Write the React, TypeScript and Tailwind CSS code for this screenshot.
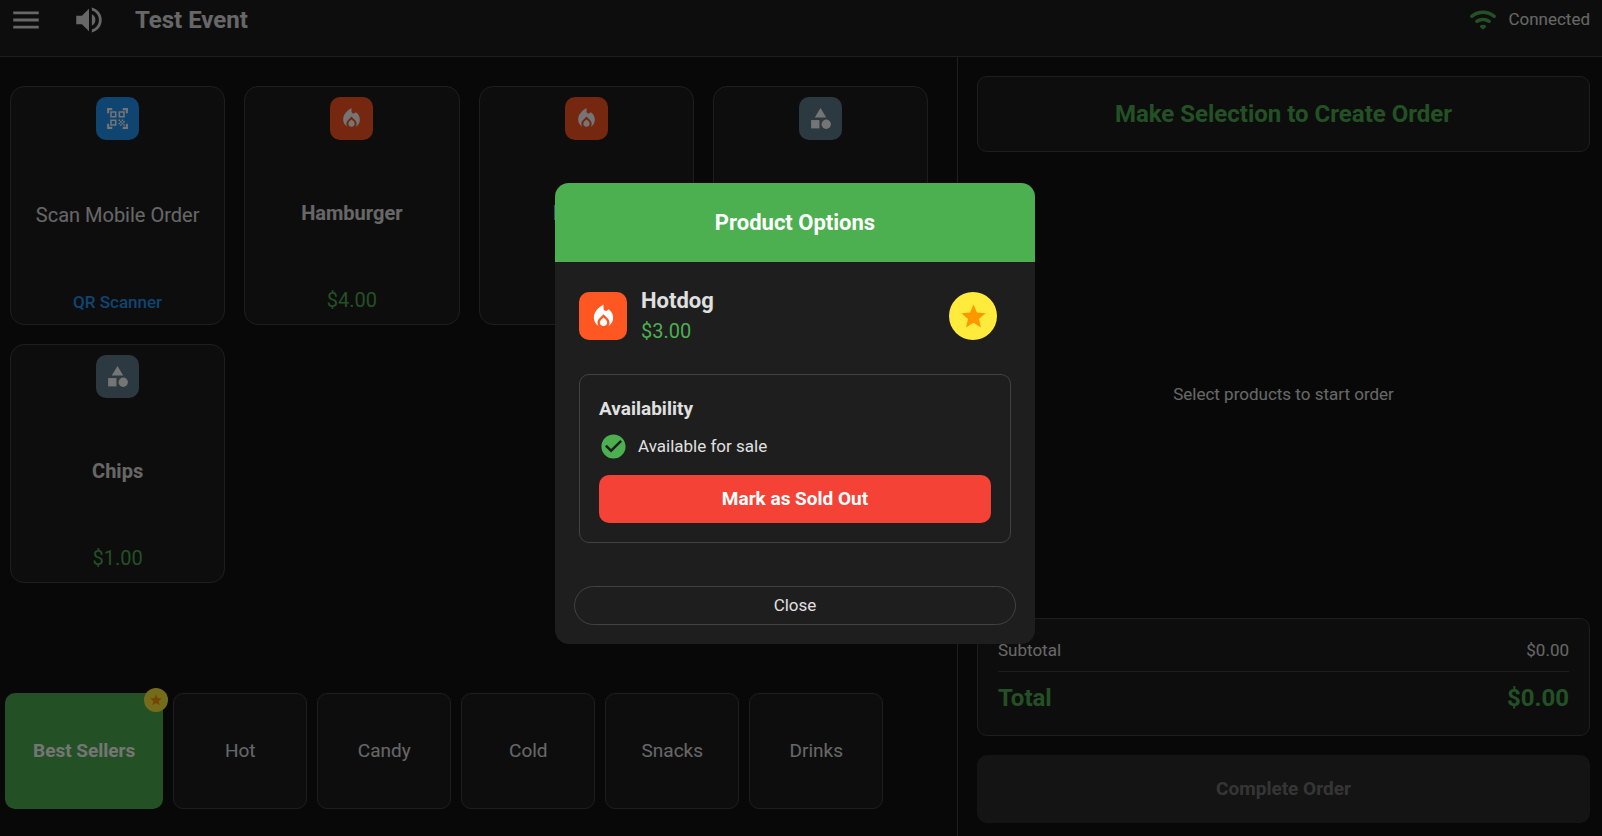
import React from 'react';
import type { IconType } from 'react-icons';
import {
  MdCategory,
  MdCheckCircle,
  MdLocalFireDepartment,
  MdMenu,
  MdQrCodeScanner,
  MdStar,
  MdVolumeUp
} from 'react-icons/md';

interface Product {
  name: string;
  price: string;
  icon: IconType;
  iconBg: string;
}

const products: Product[] = [
  { name: 'Hamburger', price: '$4.00', icon: MdLocalFireDepartment, iconBg: 'bg-[#ff5722]' },
  { name: 'Hotdog', price: '$3.00', icon: MdLocalFireDepartment, iconBg: 'bg-[#ff5722]' },
  { name: 'Candy', price: '$2.00', icon: MdCategory, iconBg: 'bg-[#607d8b]' },
  { name: 'Chips', price: '$1.00', icon: MdCategory, iconBg: 'bg-[#607d8b]' }
];

const categories = ['Hot', 'Candy', 'Cold', 'Snacks', 'Drinks'];

const cardClass =
  'aspect-[9/10] flex flex-col items-center justify-between rounded-[14px] border border-[#424242] bg-[#1e1e1e] px-2 py-[10px] cursor-pointer';

const WifiIcon: React.FC = () => (
  <svg className="size-[30px] text-[#4caf50]" viewBox="0 0 24 24" fill="currentColor">
    <path d="M2.06 10.06c.51.51 1.32.56 1.87.1 4.67-3.84 11.45-3.84 16.13-.01.56.46 1.38.42 1.89-.09.59-.59.55-1.57-.1-2.1-5.71-4.67-13.97-4.67-19.69 0-.65.52-.7 1.5-.1 2.1z" />
    <path d="M9.82 17.82l1.47 1.47c.39.39 1.02.39 1.41 0l1.47-1.47c.47-.47.37-1.28-.23-1.59-1.22-.63-2.68-.63-3.91 0-.57.31-.68 1.12-.21 1.59z" />
    <path d="M6.09 14.09c.49.49 1.26.54 1.83.13 2.44-1.73 5.72-1.73 8.16 0 .57.4 1.34.36 1.83-.13l.01-.01c.6-.6.56-1.62-.13-2.11-3.44-2.49-8.13-2.49-11.58 0-.69.5-.73 1.51-.12 2.12z" />
  </svg>
);

const Header: React.FC = () => (
  <header className="flex items-start justify-between border-b border-[#424242] bg-[#1e1e1e] pr-3 pb-4 pl-[9px]">
    <div className="flex h-10 items-center">
      <button aria-label="Menu" className="cursor-pointer">
        <MdMenu size={34} />
      </button>
      <button aria-label="Sound" className="ml-[29px] cursor-pointer">
        <MdVolumeUp size={34} />
      </button>
      <h1 className="ml-[29px] text-2xl font-bold">Test Event</h1>
    </div>
    <div className="flex h-10 items-center gap-[10px]">
      <WifiIcon />
      <span className="text-[17px]">Connected</span>
    </div>
  </header>
);

const ProductCard: React.FC<{ product: Product }> = ({ product }) => {
  const Icon = product.icon;

  return (
    <button className={cardClass}>
      <span className={`flex size-[43px] items-center justify-center rounded-[10px] text-white ${product.iconBg}`}>
        <Icon size={25} />
      </span>
      <span className="pb-[2px] text-xl leading-6 font-bold">{product.name}</span>
      <span className="pb-[2px] text-xl leading-6 text-[#4caf50]">{product.price}</span>
    </button>
  );
};

const CategoryBar: React.FC = () => (
  <nav className="flex gap-[10px] pb-[27px] pl-[5px]">
    <button className="relative h-[116px] cursor-pointer rounded-[10px] bg-[#4caf50] px-7 text-[19px] font-bold text-white">
      Best Sellers
      {/* Star badge */}
      <span className="absolute -top-[5px] -right-[5px] flex size-6 items-center justify-center rounded-full bg-[#ffeb3b] text-[#ff9800]">
        <MdStar size={14} />
      </span>
    </button>
    {categories.map((category) => (
      <button
        key={category}
        className="h-[116px] min-w-[134px] cursor-pointer rounded-[10px] border border-[#424242] bg-[#1e1e1e] text-[19px]"
      >
        {category}
      </button>
    ))}
  </nav>
);

const OrderPanel: React.FC = () => (
  <aside className="flex flex-col border-l border-[#424242] pt-[19px] pr-3 pb-[13px] pl-[19px]">
    <div className="mb-[19px] flex h-[76px] items-center justify-center rounded-[10px] border border-[#424242] bg-[#1e1e1e]">
      <h2 className="text-2xl font-bold text-[#4caf50]">Make Selection to Create Order</h2>
    </div>

    <div className="flex flex-1 items-center justify-center">
      <p className="text-[17px]">Select products to start order</p>
    </div>

    {/* Totals */}
    <div className="mb-[19px] rounded-[10px] border border-[#424242] bg-[#1e1e1e] px-5 pt-[19px] pb-[21px]">
      <div className="flex justify-between border-b border-[#424242] pb-[9px] text-[17px] leading-6">
        <span>Subtotal</span>
        <span>$0.00</span>
      </div>
      <div className="flex justify-between pt-[10px] text-2xl font-bold text-[#4caf50]">
        <span>Total</span>
        <span>$0.00</span>
      </div>
    </div>

    <button disabled className="h-[68px] rounded-[10px] bg-[#2c2c2c] text-[19px] font-bold text-[#757575]">
      Complete Order
    </button>
  </aside>
);

const ProductOptionsDialog: React.FC = () => (
  <div className="fixed inset-0 flex items-center justify-center bg-black/54 pr-3 pb-[9px]">
    <div
      role="dialog"
      aria-modal="true"
      aria-labelledby="dialog-title"
      className="w-[480px] overflow-hidden rounded-[14px] bg-[#1e1e1e]"
    >
      <h2
        id="dialog-title"
        className="flex h-[79px] items-center justify-center bg-[#4caf50] text-[22px] font-bold text-white"
      >
        Product Options
      </h2>

      <div className="px-6 pt-[25px]">
        {/* Product summary */}
        <div className="flex items-center pr-[14px]">
          <span className="flex size-12 items-center justify-center rounded-[10px] bg-[#ff5722] text-white">
            <MdLocalFireDepartment size={29} />
          </span>
          <div className="ml-[14px] flex flex-1 flex-col gap-[2px]">
            <h3 className="text-[22px] leading-7 font-bold">Hotdog</h3>
            <p className="text-xl leading-7 text-[#4caf50]">$3.00</p>
          </div>
          <button
            aria-label="Best seller"
            className="flex size-12 cursor-pointer items-center justify-center rounded-full bg-[#ffeb3b] text-[#ff9800]"
          >
            <MdStar size={29} />
          </button>
        </div>

        {/* Availability */}
        <section className="mt-[29px] rounded-[10px] border border-[#424242] px-[19px] pt-5 pb-[19px]">
          <h3 className="text-[19px] leading-7 font-bold">Availability</h3>
          <div className="mt-[9px] mb-[14px] flex items-center gap-[10px]">
            <MdCheckCircle size={29} className="text-[#4caf50]" />
            <span className="text-[17px]">Available for sale</span>
          </div>
          <button className="h-12 w-full cursor-pointer rounded-[10px] bg-[#f44336] text-[19px] font-bold text-white">
            Mark as Sold Out
          </button>
        </section>
      </div>

      <div className="px-[19px] pt-[43px] pb-[19px]">
        <button className="h-[39px] w-full cursor-pointer rounded-full border border-[#424242] text-[17px]">
          Close
        </button>
      </div>
    </div>
  </div>
);

export default function App() {
  return (
    <div className="flex min-h-screen flex-col bg-[#121212] font-[Roboto,sans-serif] text-[#e0e0e0]">
      <Header />
      <div className="grid flex-1 grid-cols-[957fr_645fr]">
        <main className="flex flex-col justify-between">
          <div className="grid grid-cols-4 gap-[19px] pt-[29px] pr-[29px] pl-[10px]">
            <button className={cardClass}>
              <span className="flex size-[43px] items-center justify-center rounded-[10px] bg-[#2196f3] text-white">
                <MdQrCodeScanner size={25} />
              </span>
              <span className="text-xl leading-6">Scan Mobile Order</span>
              <span className="text-[17px] leading-6 font-medium text-[#2196f3]">QR Scanner</span>
            </button>
            {products.map((product) => (
              <ProductCard key={product.name} product={product} />
            ))}
          </div>
          <CategoryBar />
        </main>
        <OrderPanel />
      </div>
      <ProductOptionsDialog />
    </div>
  );
}
